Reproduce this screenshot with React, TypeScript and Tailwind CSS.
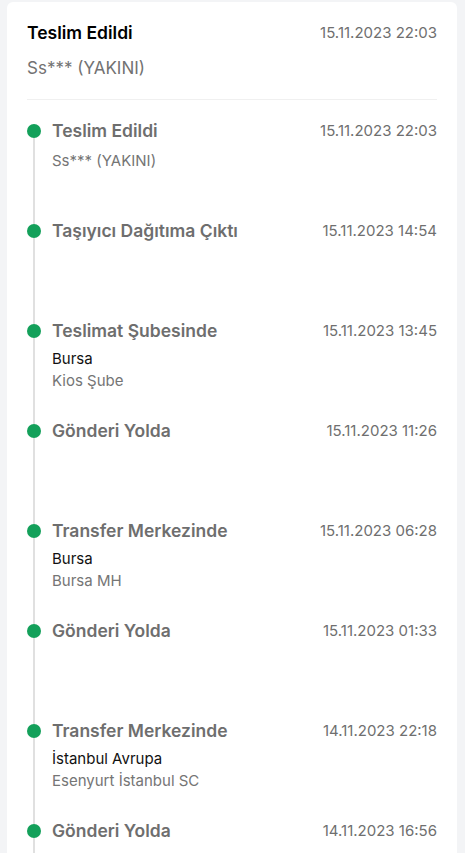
const events = [
  { title: 'Teslim Edildi', date: '15.11.2023 22:03', lines: [], note: 'Ss*** (YAKINI)' },
  { title: 'Taşıyıcı Dağıtıma Çıktı', date: '15.11.2023 14:54', lines: [] },
  { title: 'Teslimat Şubesinde', date: '15.11.2023 13:45', lines: ['Bursa', 'Kios Şube'] },
  { title: 'Gönderi Yolda', date: '15.11.2023 11:26', lines: [] },
  { title: 'Transfer Merkezinde', date: '15.11.2023 06:28', lines: ['Bursa', 'Bursa MH'] },
  { title: 'Gönderi Yolda', date: '15.11.2023 01:33', lines: [] },
  { title: 'Transfer Merkezinde', date: '14.11.2023 22:18', lines: ['İstanbul Avrupa', 'Esenyurt İstanbul SC'] },
  { title: 'Gönderi Yolda', date: '14.11.2023 16:56', lines: [] },
]

type Ev = { title: string; date: string; lines: string[]; note?: string }

export default function App() {
  return (
    <div
      className="min-h-screen bg-[#f3f4f6] pt-[2px] pl-[7px] pr-[8px]"
      style={{ fontFamily: 'Inter, "Noto Sans", sans-serif' }}
    >
      <div className="bg-white rounded-md px-5 pt-[19px]">
        <div className="flex items-center justify-between h-6">
          <p className="text-[17.5px] font-semibold text-black">Teslim Edildi</p>
          <p className="text-[15px] text-[#6f6f6f]">15.11.2023 22:03</p>
        </div>
        <p className="mt-[11px] h-6 leading-6 text-[17px] text-[#727272]">Ss*** (YAKINI)</p>
        <div className="mt-[19px] h-px bg-[#f0f0f0]" />

        <div className="pt-[19px]">
          {events.map((ev, i) => (
            <TimelineItem key={i} ev={ev} first={i === 0} />
          ))}
        </div>
      </div>
    </div>
  )
}

function TimelineItem({ ev, first }: { ev: Ev; first: boolean }) {
  return (
    <div className="flex gap-[11px] min-h-[100px]">
      <div className="flex flex-col items-center w-[14px] shrink-0">
        <div className={`h-[5px] w-[2px] ${first ? 'bg-transparent' : 'bg-[#e0e0e0]'}`} />
        <div className="h-[14px] w-[14px] rounded-full bg-[#13a05a]" />
        <div className="flex-1 w-[2px] bg-[#e0e0e0]" />
      </div>
      <div className="flex-1 min-w-0">
        <div className="flex items-center justify-between h-6">
          <p className="text-[17.5px] font-semibold text-[#6e6e6e]">{ev.title}</p>
          <p className="text-[15px] text-[#6f6f6f]">{ev.date}</p>
        </div>
        {ev.note && (
          <p className="mt-[7px] text-[15px] leading-[22px] text-[#757575]">{ev.note}</p>
        )}
        {ev.lines.length > 0 && (
          <div className="mt-[5px] text-[15px] leading-[22px]">
            <p className="text-[#111]">{ev.lines[0]}</p>
            <p className="text-[#757575]">{ev.lines[1]}</p>
          </div>
        )}
      </div>
    </div>
  )
}
